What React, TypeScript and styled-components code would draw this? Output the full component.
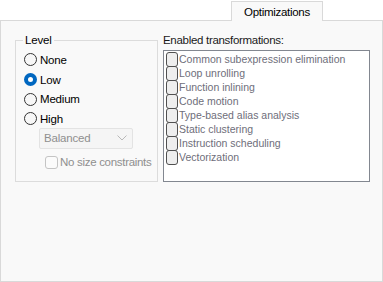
import React from "react";
import styled, { createGlobalStyle } from "styled-components";

const GlobalStyle = createGlobalStyle`
  html, body {
    margin: 0;
    padding: 0;
    background: #ffffff;
  }
  body {
    font-family: "Liberation Sans", Arial, sans-serif;
    font-size: 11px;
    color: #000;
  }
`;

const levels = ["None", "Low", "Medium", "High"];

const transformations = [
  "Common subexpression elimination",
  "Loop unrolling",
  "Function inlining",
  "Code motion",
  "Type-based alias analysis",
  "Static clustering",
  "Instruction scheduling",
  "Vectorization",
];

const App = () => {
  return (
    <Window>
      <GlobalStyle />
      <TabStrip>
        <Tab>Optimizations</Tab>
      </TabStrip>
      <Panel>
        <GroupBox>
          <Legend>Level</Legend>
          <RadioList>
            {levels.map((level) => (
              <RadioRow key={level}>
                <Radio $checked={level === "Low"} />
                {level}
              </RadioRow>
            ))}
          </RadioList>
          <Combo>
            Balanced
            <svg width="10" height="6" viewBox="0 0 10 6">
              <path d="M0.5 0.5 L5 5 L9.5 0.5" fill="none" stroke="#b8b8b8" strokeWidth="1" />
            </svg>
          </Combo>
          <CheckRow>
            <CheckBox />
            No size constraints
          </CheckRow>
        </GroupBox>
        <Column>
          <Label>Enabled transformations:</Label>
          <ListBox>
            {transformations.map((item) => (
              <ListItem key={item}>
                <ListCheck />
                {item}
              </ListItem>
            ))}
          </ListBox>
        </Column>
      </Panel>
    </Window>
  );
};

const Window = styled.div`
  width: 383px;
  height: 282px;
  display: flex;
  flex-direction: column;
`;

const TabStrip = styled.div`
  height: 20px;
  display: flex;
  align-items: flex-end;
  padding-left: 231px;
`;

const Tab = styled.div`
  position: relative;
  z-index: 1;
  width: 92px;
  height: 20px;
  margin-bottom: -1px;
  box-sizing: border-box;
  border: 1px solid #d9d9d9;
  border-bottom: none;
  background: #f9f9f9;
  display: flex;
  align-items: center;
  justify-content: center;
  font-size: 11.5px;
  color: #000;
  letter-spacing: -0.3px;
`;

const Panel = styled.div`
  width: 383px;
  height: 262px;
  box-sizing: border-box;
  border: 1px solid #d9d9d9;
  background: #f9f9f9;
  display: grid;
  grid-template-columns: 143px 207px;
  column-gap: 5px;
  align-items: start;
  padding: 12px 0 0 14px;
`;

const GroupBox = styled.fieldset`
  margin: 0;
  height: 149px;
  box-sizing: border-box;
  border: 1px solid #dcdcdc;
  padding: 0 0 0 8px;
  display: flex;
  flex-direction: column;
`;

const Legend = styled.legend`
  padding: 0 2px;
  margin-left: -1px;
  line-height: 14px;
  font-size: 11.5px;
  letter-spacing: -0.2px;
`;

const RadioList = styled.div`
  display: flex;
  flex-direction: column;
  margin-top: 3px;
`;

const RadioRow = styled.div`
  height: 19.7px;
  display: flex;
  align-items: center;
  gap: 3px;
  font-size: 11.5px;
  letter-spacing: -0.2px;
`;

const Radio = styled.span<{ $checked?: boolean }>`
  width: 13px;
  height: 13px;
  box-sizing: border-box;
  border-radius: 50%;
  border: ${({ $checked }) => ($checked ? "4px solid #0067c0" : "1px solid #333333")};
  background: ${({ $checked }) => ($checked ? "#ffffff" : "#f7f7f7")};
`;

const Combo = styled.div`
  margin: -1px 0 0 15px;
  width: 94px;
  height: 21px;
  box-sizing: border-box;
  border: 1px solid #e3e3e3;
  border-radius: 2px;
  background: #f5f5f5;
  color: #8f8f8f;
  font-size: 11.5px;
  letter-spacing: -0.2px;
  display: flex;
  align-items: center;
  justify-content: space-between;
  padding: 0 5px 0 4px;
`;

const CheckRow = styled.div`
  margin: 7px 0 0 21px;
  display: flex;
  align-items: center;
  gap: 2px;
  color: #8f8f8f;
  font-size: 11.5px;
  letter-spacing: -0.3px;
`;

const CheckBox = styled.span`
  width: 13px;
  height: 13px;
  box-sizing: border-box;
  border: 1px solid #c4c4c4;
  border-radius: 3px;
  background: #fbfbfb;
`;

const Column = styled.div`
  display: flex;
  flex-direction: column;
  padding-top: 1px;
`;

const Label = styled.div`
  height: 16px;
  font-size: 11.5px;
  letter-spacing: -0.3px;
  color: #1a1a1a;
`;

const ListBox = styled.div`
  height: 132px;
  box-sizing: border-box;
  border: 1px solid #828790;
  background: #ffffff;
  padding: 1px 0 0 2px;
  display: flex;
  flex-direction: column;
`;

const ListItem = styled.div`
  height: 14px;
  display: flex;
  align-items: center;
  color: #6e6e7a;
  font-size: 10.5px;
`;

const ListCheck = styled.span`
  width: 12px;
  height: 15px;
  flex: none;
  box-sizing: border-box;
  border: 1px solid #505050;
  border-radius: 3px;
  background: #eeeeee;
  margin-right: 1px;
`;

export default App;
